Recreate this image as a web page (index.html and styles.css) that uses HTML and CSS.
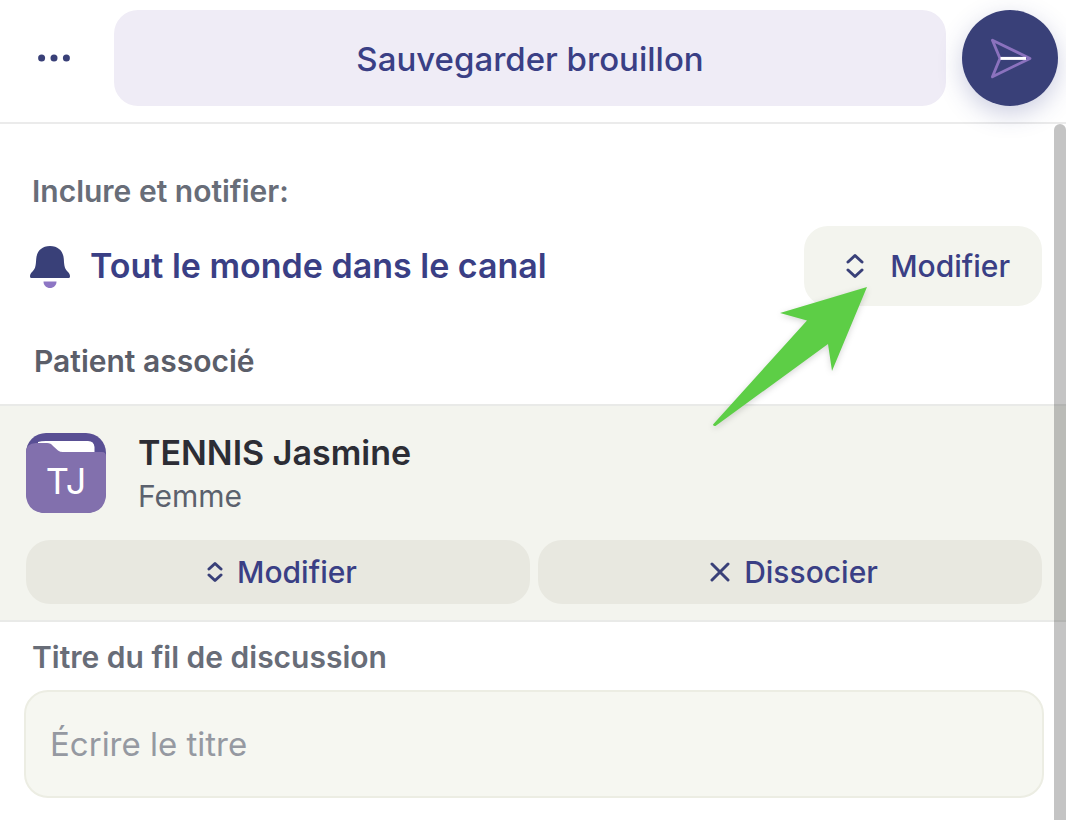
FILE: index.html
```html
<!DOCTYPE html>
<html lang="fr">
<head>
<meta charset="utf-8">
<meta name="viewport" content="width=device-width, initial-scale=1">
<title>Nouveau fil de discussion</title>
<link rel="stylesheet" href="styles.css">
</head>
<body>
<form class="composer">
  <header class="toolbar">
    <button class="menu-button" type="button" aria-label="Plus d'options">
      <svg width="32" height="8" viewBox="0 0 32 8" fill="currentColor"><circle cx="3.6" cy="4" r="3.5"/><circle cx="16" cy="4" r="3.5"/><circle cx="28.4" cy="4" r="3.5"/></svg>
    </button>
    <button class="draft-button" type="button">Sauvegarder brouillon</button>
    <button class="send-button" type="submit" aria-label="Envoyer">
      <svg width="44" height="44" viewBox="0 0 44 44" fill="none" stroke-linejoin="round" stroke-linecap="round"><path d="M4.400 4.200 42 22.400 4.400 40.800 12 22.400Z" stroke="#8b72be" stroke-width="2.8"/><path d="M12.500 22.400H38" stroke="#fff" stroke-width="3" stroke-linecap="butt"/></svg>
    </button>
  </header>

  <main class="content">
    <section class="notify">
      <h2 class="label">Inclure et notifier:</h2>
      <div class="notify-row">
        <svg class="bell" width="40" height="44" viewBox="0 0 40 44"><path d="M20 2C11 2 6.600 8 6.200 15C5.800 23 5 25 2.500 27.500C.6 29.500 0 30.500 0 32.500Q0 34 1.500 34H38.500Q40 34 40 32.500C40 30.500 39.400 29.500 37.500 27.500C35 25 34.200 23 33.800 15C33.400 8 29 2 20 2Z" fill="#394078"/><path d="M13.500 37.500H26.500C26.500 41.500 23.500 44 20 44S13.500 41.500 13.500 37.500Z" fill="#8d76c4"/></svg>
        <p class="audience">Tout le monde dans le canal</p>
        <div class="edit-audience">
          <button class="edit-button" type="button">
            <svg width="18" height="26" viewBox="0 0 18 26" class="icon"><path d="M2 9 9 2.500 16 9M2 17 9 23.500 16 17"/></svg>
            Modifier
          </button>
          <svg class="pointer" width="160" height="146" viewBox="0 0 160 146"><path d="M157 4 70 30 97 37.500 3 141.500Q3.500 143.500 5.500 143L118 61 122 88Z" fill="#5dce46"/></svg>
        </div>
      </div>
    </section>

    <h2 class="label label-patient">Patient associé</h2>
    <section class="patient">
      <div class="patient-info">
        <svg class="avatar" width="80" height="80" viewBox="0 0 80 80">
          <rect width="80" height="80" rx="20" fill="#594f94"/>
          <path d="M12 9Q15 8 20 8H62Q68 8 68.500 14V24H12Z" fill="#fff"/>
          <path d="M0 20Q0 10 10 10H21Q25 10 27 13L32 17.500Q34 19 37 19H76Q80 19 80 23V60Q80 80 60 80H20Q0 80 0 60Z" fill="#8270ad"/>
          <text x="40" y="61" text-anchor="middle" class="initials">TJ</text>
        </svg>
        <div>
          <p class="patient-name">TENNIS Jasmine</p>
          <p class="patient-sex">Femme</p>
        </div>
      </div>
      <div class="patient-actions">
        <button class="action-button" type="button">
          <svg width="16" height="22" viewBox="0 0 16 22" class="icon"><path d="M2 8 8 2.500 14 8M2 14 8 19.500 14 14"/></svg>
          Modifier
        </button>
        <button class="action-button" type="button">
          <svg width="20" height="20" viewBox="0 0 20 20" class="icon"><path d="M2 2 18 18M18 2 2 18"/></svg>
          Dissocier
        </button>
      </div>
    </section>

    <section class="thread">
      <label class="label" for="thread-title">Titre du fil de discussion</label>
      <input class="title-input" id="thread-title" type="text" placeholder="Écrire le titre">
    </section>
    <div class="scrollbar"></div>
  </main>
</form>
</body>
</html>
```
FILE: styles.css
```css
* {
  box-sizing: border-box;
}

body {
  margin: 0;
  background: #fff;
  color: #2c2d35;
  font-family: Inter, "Liberation Sans", sans-serif;
}

h2,
p {
  margin: 0;
}

button {
  display: flex;
  align-items: center;
  justify-content: center;
  border: 0;
  padding: 0;
  color: #3a3f85;
  font: inherit;
  font-size: 30px;
  line-height: 40px;
  cursor: pointer;
}

svg {
  flex: none;
}

.composer {
  display: flex;
  flex-direction: column;
  min-height: 100vh;
}

.toolbar {
  display: flex;
  gap: 16px;
  padding: 10px 8px 16px 10px;
  border-bottom: 2px solid #ebebeb;
}

.menu-button {
  width: 88px;
  background: none;
  color: #394078;
}

.draft-button {
  flex: 1;
  padding-top: 2px;
  border-radius: 24px;
  background: #efecf6;
  font-size: 33px;
  font-weight: 500;
}

.send-button {
  width: 96px;
  height: 96px;
  border-radius: 50%;
  background: #394078;
  box-shadow: 0 8px 24px rgba(57, 64, 140, 0.25);
}

.content {
  position: relative;
  flex: 1;
}

.notify {
  padding: 47px 24px 0 30px;
}

.label {
  display: block;
  padding-left: 2px;
  color: #686d78;
  font-size: 30px;
  font-weight: 600;
  line-height: 40px;
}

.notify-row {
  display: flex;
  align-items: center;
  gap: 20px;
  margin-top: 15px;
}

.audience {
  flex: 1;
  color: #3a3f85;
  font-size: 34px;
  font-weight: 600;
  line-height: 40px;
}

.edit-audience {
  position: relative;
}

.edit-button {
  gap: 26px;
  height: 80px;
  padding: 0 32px 0 42px;
  border-radius: 24px;
  background: #f3f4ee;
  font-weight: 500;
}

.icon {
  fill: none;
  stroke: #394078;
  stroke-width: 3;
  stroke-linecap: round;
  stroke-linejoin: round;
}

.pointer {
  position: absolute;
  top: 57px;
  right: 172px;
  overflow: visible;
  pointer-events: none;
  filter: drop-shadow(0 2px 3px rgba(0, 0, 0, 0.16));
}

.label-patient {
  padding: 35px 34px 23px;
  color: #5b5e69;
}

.patient {
  padding: 27px 24px 16px 26px;
  border-top: 2px solid #e9eae8;
  border-bottom: 2px solid #e9eae8;
  background: #f3f4ee;
}

.patient-info {
  display: flex;
  align-items: flex-start;
  gap: 32px;
}

.initials {
  fill: #fff;
  font-size: 36px;
}

.patient-name {
  font-size: 34px;
  font-weight: 600;
  line-height: 40px;
}

.patient-sex {
  margin-top: 3px;
  color: #5b616d;
  font-size: 30px;
  line-height: 40px;
}

.patient-actions {
  display: grid;
  grid-template-columns: 1fr 1fr;
  gap: 8px;
  margin-top: 24px;
}

.action-button {
  gap: 14px;
  height: 64px;
  padding-left: 8px;
  border-radius: 24px;
  background: #e8e8e0;
  font-weight: 500;
}

.thread {
  padding: 15px 22px 22px 24px;
}

.thread .label {
  padding-left: 8px;
}

.title-input {
  width: 100%;
  height: 108px;
  margin-top: 13px;
  padding: 0 24px;
  border: 2px solid #ecede3;
  border-radius: 24px;
  background: #f6f7f1;
  color: #2c2d35;
  font: inherit;
  font-size: 33px;
}

.title-input::placeholder {
  color: #9599a1;
  opacity: 1;
}

.scrollbar {
  position: absolute;
  top: 0;
  right: 0;
  bottom: 0;
  width: 12px;
  border-radius: 8px 8px 0 0;
  background: rgba(0, 0, 0, 0.23);
}
```
